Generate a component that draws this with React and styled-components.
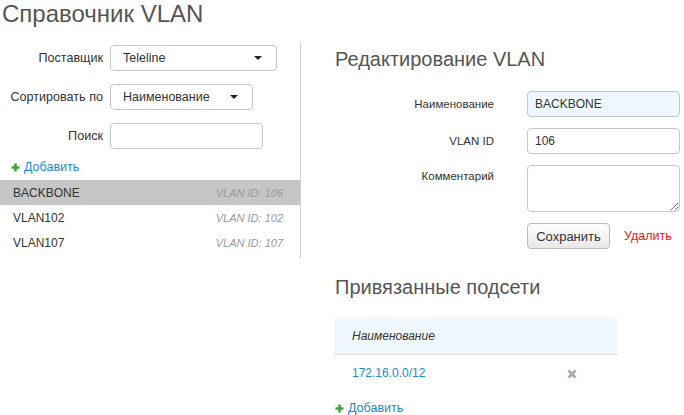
import React from 'react'
import styled, { createGlobalStyle } from 'styled-components'

const GlobalStyle = createGlobalStyle`
  html, body {
    margin: 0;
    padding: 0;
    background: #fff;
  }
  body {
    font-family: "Liberation Sans", Arial, sans-serif;
    font-size: 12px;
    color: #333;
  }
`

const vlans = [
    { name: 'BACKBONE', id: 106 },
    { name: 'VLAN102', id: 102 },
    { name: 'VLAN107', id: 107 }
]

const subnets = ['172.16.0.0/12']

const PlusIcon = () => (
    <svg width='9' height='9' viewBox='0 0 9 9'>
        <path d='M4.5 0.5v8M0.5 4.5h8' stroke='#44a044' strokeWidth='2.6' />
    </svg>
)

const CrossIcon = () => (
    <svg width='10' height='10' viewBox='0 0 10 10'>
        <path d='M1.5 1.5l7 7M8.5 1.5l-7 7' stroke='#aaa' strokeWidth='2.6' />
    </svg>
)

export default function App () {
    const active = 'BACKBONE'
    return (
        <>
            <GlobalStyle />
            <Page>
                <Title>Справочник VLAN</Title>
                <Columns>
                    <Sidebar>
                        <FilterRow>
                            <FilterLabel>Поставщик</FilterLabel>
                            <Select width='167px'>Teleline<Caret /></Select>
                        </FilterRow>
                        <FilterRow>
                            <FilterLabel>Сортировать по</FilterLabel>
                            <Select width='143px'>Наименование<Caret /></Select>
                        </FilterRow>
                        <FilterRow>
                            <FilterLabel>Поиск</FilterLabel>
                            <Input width='153px' />
                        </FilterRow>
                        <AddLink indent='11px' top='9px'><PlusIcon />Добавить</AddLink>
                        <List>
                            {vlans.map(v => (
                                <ListItem key={v.name} active={v.name === active}>
                                    <span>{v.name}</span>
                                    <VlanId>VLAN ID: {v.id}</VlanId>
                                </ListItem>
                            ))}
                        </List>
                    </Sidebar>
                    <Editor>
                        <Heading>Редактирование VLAN</Heading>
                        <Form>
                            <FormLabel>Наименование</FormLabel>
                            <Input width='153px' focused defaultValue='BACKBONE' />
                            <FormLabel>VLAN ID</FormLabel>
                            <Input width='153px' defaultValue='106' />
                            <FormLabel top>Комментарий</FormLabel>
                            <TextArea />
                            <span />
                            <Actions>
                                <Button>Сохранить</Button>
                                <DeleteLink>Удалить</DeleteLink>
                            </Actions>
                        </Form>
                        <Heading spaced>Привязанные подсети</Heading>
                        <Table>
                            <thead>
                                <tr>
                                    <Th>Наименование</Th>
                                    <Th />
                                </tr>
                            </thead>
                            <tbody>
                                {subnets.map(s => (
                                    <tr key={s}>
                                        <Td><SubnetLink>{s}</SubnetLink></Td>
                                        <RemoveCell><CrossIcon /></RemoveCell>
                                    </tr>
                                ))}
                            </tbody>
                        </Table>
                        <AddLink top='9px'><PlusIcon />Добавить</AddLink>
                    </Editor>
                </Columns>
            </Page>
        </>
    )
}

const Page = styled.div`
    width: 684px;
    height: 415px;
    overflow: hidden;
`
const Title = styled.h1`
    margin: 0 0 0 2px;
    font-size: 24px;
    line-height: 28px;
    font-weight: normal;
    color: #555;
`
const Columns = styled.div`
    display: flex;
    margin-top: 15px;
    align-items: flex-start;
`
const Sidebar = styled.div`
    width: 301px;
    box-sizing: border-box;
    border-right: 1px solid #ccc;
    padding: 2px 0 3px;
    display: flex;
    flex-direction: column;
`
const FilterRow = styled.div`
    display: flex;
    align-items: center;
    gap: 7px;
    margin-bottom: 13px;
    &:nth-child(3) { margin-bottom: 0; }
`
const FilterLabel = styled.label`
    width: 103px;
    text-align: right;
    font-size: 12.6px;
    color: #333;
`
const Select = styled.div`
    position: relative;
    width: ${ ({ width }) => width };
    height: 26px;
    box-sizing: border-box;
    border: 1px solid #c6c6c6;
    border-radius: 4px;
    background: #fff;
    padding: 0 12px;
    display: flex;
    align-items: center;
    justify-content: space-between;
    font-size: 12.5px;
    color: #333;
`
const Caret = styled.span`
    width: 0;
    height: 0;
    border-left: 4px solid transparent;
    border-right: 4px solid transparent;
    border-top: 4px solid #222;
    margin-right: 2px;
`
const Input = styled.input`
    width: ${ ({ width }) => width };
    height: 26px;
    box-sizing: border-box;
    border: 1px solid #c6c6c6;
    border-radius: 4px;
    padding: 0 7px;
    font-family: "Liberation Sans", Arial, sans-serif;
    font-size: 12px;
    color: #333;
    background: ${ ({ focused }) => focused ? '#edf7fd' : '#fff' };
    outline: none;
`
const AddLink = styled.a`
    display: flex;
    align-items: center;
    gap: 4px;
    margin-top: ${ ({ top }) => top };
    padding-left: ${ ({ indent }) => indent || '0' };
    height: 18px;
    font-size: 12.5px;
    color: #1a8ad0;
    cursor: pointer;
`
const List = styled.div`
    margin-top: 4px;
    display: flex;
    flex-direction: column;
`
const ListItem = styled.div`
    height: 25px;
    display: flex;
    align-items: center;
    justify-content: space-between;
    padding: 0 17px 0 13px;
    font-size: 12px;
    color: #333;
    background: ${ ({ active }) => active ? '#c6c6c6' : 'transparent' };
`
const VlanId = styled.span`
    font-size: 11px;
    font-style: italic;
    color: #999;
`
const Editor = styled.div`
    flex: 1;
    padding-left: 34px;
`
const Heading = styled.h2`
    margin: ${ ({ spaced }) => spaced ? '26px 0 0' : '4px 0 0' };
    font-size: 20px;
    line-height: 24px;
    font-weight: normal;
    color: #555;
`
const Form = styled.div`
    display: grid;
    grid-template-columns: 160px 153px;
    column-gap: 33px;
    row-gap: 11px;
    align-items: center;
    margin-top: 20px;
    margin-left: -1px;
`
const FormLabel = styled.label`
    text-align: right;
    font-size: 11.5px;
    color: #333;
    align-self: ${ ({ top }) => top ? 'start' : 'center' };
    padding-top: ${ ({ top }) => top ? '5px' : '0' };
`
const TextArea = styled.textarea`
    width: 153px;
    height: 47px;
    box-sizing: border-box;
    border: 1px solid #c6c6c6;
    border-radius: 4px;
    font-family: "Liberation Sans", Arial, sans-serif;
    font-size: 12px;
    display: block;
    outline: none;
`
const Actions = styled.div`
    display: flex;
    align-items: center;
    gap: 14px;
    width: 200px;
`
const Button = styled.button`
    height: 26px;
    width: 83px;
    border: 1px solid #bbb;
    border-radius: 4px;
    background: linear-gradient(#fff, #e8e8e8);
    font-family: "Liberation Sans", Arial, sans-serif;
    font-size: 13px;
    color: #333;
    padding: 0;
`
const DeleteLink = styled.a`
    font-size: 12.5px;
    color: #ee1111;
    cursor: pointer;
`
const Table = styled.table`
    margin-top: 18px;
    margin-left: -1px;
    width: 283px;
    border-collapse: collapse;
`
const Th = styled.th`
    height: 37px;
    padding: 0 0 0 18px;
    text-align: left;
    font-weight: normal;
    font-style: italic;
    font-size: 12px;
    color: #333;
    background: #eef8fe;
    border-bottom: 1px solid #ddd;
`
const Td = styled.td`
    height: 35px;
    padding: 0 0 0 18px;
    font-size: 12px;
`
const RemoveCell = styled.td`
    width: 50px;
    padding: 4px 0 0 0;
`
const SubnetLink = styled.a`
    color: #1a8ad0;
    cursor: pointer;
`
